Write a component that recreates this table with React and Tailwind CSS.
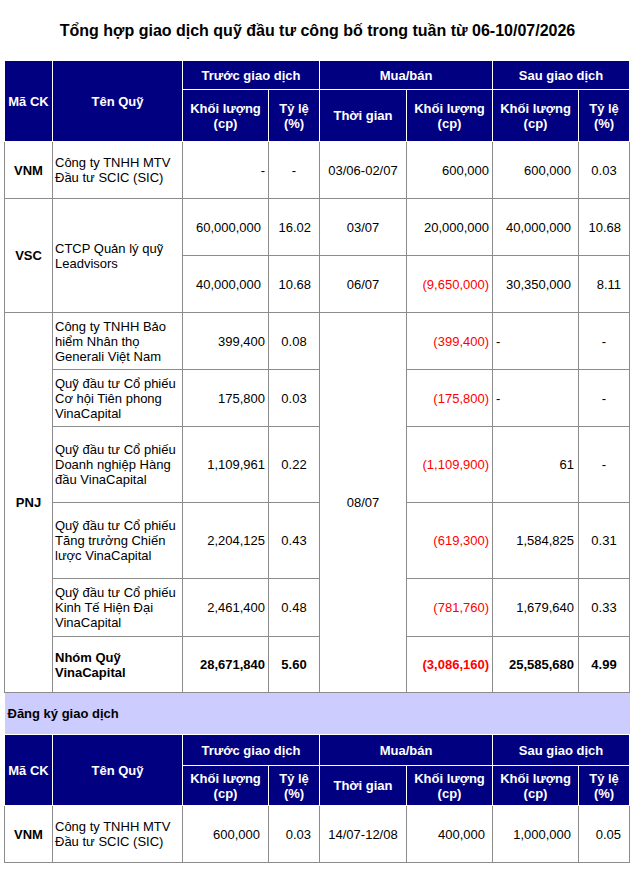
import React from "react";

const TD = "border border-[#8c8c8c] p-0 align-middle text-[13px] leading-[15px]";
const TH = "border border-white bg-[#000080] p-0 align-middle text-[13px] leading-[15px] text-white font-bold text-center";
const RED = "text-[#ff0000]";

function Header({ h1, h2 }) {
  return (
    <>
      <tr className={h1}>
        <th rowSpan={2} className={TH}>Mã CK</th>
        <th rowSpan={2} className={TH}>Tên Quỹ</th>
        <th colSpan={2} className={TH}>Trước giao dịch</th>
        <th colSpan={2} className={TH}>Mua/bán</th>
        <th colSpan={2} className={TH}>Sau giao dịch</th>
      </tr>
      <tr className={h2}>
        <th className={TH}>Khối lượng<br />(cp)</th>
        <th className={TH}>Tỷ lệ<br />(%)</th>
        <th className={TH}>Thời gian</th>
        <th className={TH}>Khối lượng<br />(cp)</th>
        <th className={TH}>Khối lượng<br />(cp)</th>
        <th className={TH}>Tỷ lệ<br />(%)</th>
      </tr>
    </>
  );
}

function PnjRow({ h, name, before, ratio, trade, after, afterRatio, first, bold }) {
  const fw = bold ? " font-bold" : "";
  return (
    <tr className={h}>
      {first && (
        <td rowSpan={6} className={TD + " text-center font-bold"}>PNJ</td>
      )}
      <td className={TD + " pl-[2px]" + fw}>{name}</td>
      <td className={TD + " text-right pr-[3px]" + fw}>{before}</td>
      <td className={TD + " text-center" + fw}>{ratio}</td>
      {first && (
        <td rowSpan={6} className={TD + " text-center"}>08/07</td>
      )}
      <td className={TD + " text-right pr-[3px] " + RED + fw}>{trade}</td>
      <td className={TD + (after === "-" ? " text-left pl-[3px]" : " text-right pr-[4px]") + fw}>{after}</td>
      <td className={TD + " text-center" + fw}>{afterRatio}</td>
    </tr>
  );
}

export default function App() {
  return (
    <div className="w-[635px] h-[869px] bg-white overflow-hidden text-black" style={{ fontFamily: '"Liberation Sans", Arial, sans-serif' }}>
      <div className="h-[60px] flex items-center justify-center pt-[1px]">
        <h1 className="text-[16px] font-bold">Tổng hợp giao dịch quỹ đầu tư công bố trong tuần từ 06-10/07/2026</h1>
      </div>
      <table className="ml-[4px] w-[625px] table-fixed border-collapse">
        <colgroup>
          <col className="w-[48px]" />
          <col className="w-[130px]" />
          <col className="w-[86px]" />
          <col className="w-[51px]" />
          <col className="w-[87px]" />
          <col className="w-[86px]" />
          <col className="w-[86px]" />
          <col className="w-[51px]" />
        </colgroup>
        <tbody>
          <Header h1="h-[29px]" h2="h-[52px]" />
          <tr className="h-[57px]">
            <td className={TD + " text-center font-bold"}>VNM</td>
            <td className={TD + " pl-[2px]"}>Công ty TNHH MTV<br />Đầu tư SCIC (SIC)</td>
            <td className={TD + " text-right pr-[3px]"}>-</td>
            <td className={TD + " text-center"}>-</td>
            <td className={TD + " text-center"}>03/06-02/07</td>
            <td className={TD + " text-right pr-[3px]"}>600,000</td>
            <td className={TD + " text-right pr-[7px]"}>600,000</td>
            <td className={TD + " text-center"}>0.03</td>
          </tr>
          <tr className="h-[57px]">
            <td rowSpan={2} className={TD + " text-center font-bold"}>VSC</td>
            <td rowSpan={2} className={TD + " pl-[2px]"}>CTCP Quản lý quỹ<br />Leadvisors</td>
            <td className={TD + " text-right pr-[7px]"}>60,000,000</td>
            <td className={TD + " text-right pr-[8px]"}>16.02</td>
            <td className={TD + " text-center"}>03/07</td>
            <td className={TD + " text-right pr-[3px]"}>20,000,000</td>
            <td className={TD + " text-right pr-[7px]"}>40,000,000</td>
            <td className={TD + " text-right pr-[8px]"}>10.68</td>
          </tr>
          <tr className="h-[57px]">
            <td className={TD + " text-right pr-[7px]"}>40,000,000</td>
            <td className={TD + " text-right pr-[8px]"}>10.68</td>
            <td className={TD + " text-center"}>06/07</td>
            <td className={TD + " text-right pr-[3px] " + RED}>(9,650,000)</td>
            <td className={TD + " text-right pr-[7px]"}>30,350,000</td>
            <td className={TD + " text-right pr-[8px]"}>8.11</td>
          </tr>
          <PnjRow
            first
            h="h-[57px]"
            name={<>Công ty TNHH Bảo<br />hiểm Nhân thọ<br />Generali Việt Nam</>}
            before="399,400"
            ratio="0.08"
            trade="(399,400)"
            after="-"
            afterRatio="-"
          />
          <PnjRow
            h="h-[57px]"
            name={<>Quỹ đầu tư Cổ phiếu<br />Cơ hội Tiên phong<br />VinaCapital</>}
            before="175,800"
            ratio="0.03"
            trade="(175,800)"
            after="-"
            afterRatio="-"
          />
          <PnjRow
            h="h-[76px]"
            name={<>Quỹ đầu tư Cổ phiếu<br />Doanh nghiệp Hàng<br />đầu VinaCapital</>}
            before="1,109,961"
            ratio="0.22"
            trade="(1,109,900)"
            after="61"
            afterRatio="-"
          />
          <PnjRow
            h="h-[76px]"
            name={<>Quỹ đầu tư Cổ phiếu<br />Tăng trưởng Chiến<br />lược VinaCapital</>}
            before="2,204,125"
            ratio="0.43"
            trade="(619,300)"
            after="1,584,825"
            afterRatio="0.31"
          />
          <PnjRow
            h="h-[58px]"
            name={<>Quỹ đầu tư Cổ phiếu<br />Kinh Tế Hiện Đại<br />VinaCapital</>}
            before="2,461,400"
            ratio="0.48"
            trade="(781,760)"
            after="1,679,640"
            afterRatio="0.33"
          />
          <PnjRow
            bold
            h="h-[56px]"
            name={<>Nhóm Quỹ<br />VinaCapital</>}
            before="28,671,840"
            ratio="5.60"
            trade="(3,086,160)"
            after="25,585,680"
            afterRatio="4.99"
          />
          <tr className="h-[42px]">
            <td colSpan={8} className="bg-[#ccccff] p-0 pl-[3px] align-middle text-[13px] leading-[15px] font-bold">
              Đăng ký giao dịch
            </td>
          </tr>
          <Header h1="h-[31px]" h2="h-[40px]" />
          <tr className="h-[57px]">
            <td className={TD + " text-center font-bold"}>VNM</td>
            <td className={TD + " pl-[2px]"}>Công ty TNHH MTV<br />Đầu tư SCIC (SIC)</td>
            <td className={TD + " text-right pr-[8px]"}>600,000</td>
            <td className={TD + " text-right pr-[8px]"}>0.03</td>
            <td className={TD + " text-center"}>14/07-12/08</td>
            <td className={TD + " text-right pr-[7px]"}>400,000</td>
            <td className={TD + " text-right pr-[7px]"}>1,000,000</td>
            <td className={TD + " text-right pr-[8px]"}>0.05</td>
          </tr>
        </tbody>
      </table>
    </div>
  );
}
